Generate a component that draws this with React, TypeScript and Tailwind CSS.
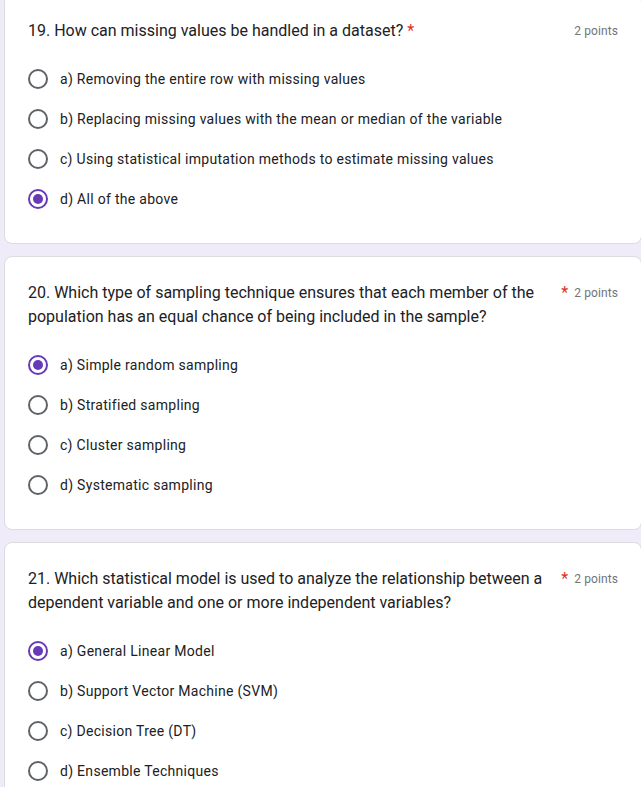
import React from "react";

type Q = {
  num: number;
  text: string;
  options: string[];
  selected: number;
};

const questions: Q[] = [
  {
    num: 19,
    text: "How can missing values be handled in a dataset?",
    options: [
      "a) Removing the entire row with missing values",
      "b) Replacing missing values with the mean or median of the variable",
      "c) Using statistical imputation methods to estimate missing values",
      "d) All of the above",
    ],
    selected: 3,
  },
  {
    num: 20,
    text: "Which type of sampling technique ensures that each member of the population has an equal chance of being included in the sample?",
    options: [
      "a) Simple random sampling",
      "b) Stratified sampling",
      "c) Cluster sampling",
      "d) Systematic sampling",
    ],
    selected: 0,
  },
  {
    num: 21,
    text: "Which statistical model is used to analyze the relationship between a dependent variable and one or more independent variables?",
    options: [
      "a) General Linear Model",
      "b) Support Vector Machine (SVM)",
      "c) Decision Tree (DT)",
      "d) Ensemble Techniques",
    ],
    selected: 0,
  },
];

function Radio({ checked }: { checked: boolean }) {
  if (checked) {
    return (
      <div className="w-5 h-5 shrink-0 rounded-full border-2 border-[#673ab7] flex items-center justify-center">
        <div className="w-2.5 h-2.5 rounded-full bg-[#673ab7]" />
      </div>
    );
  }
  return <div className="w-5 h-5 shrink-0 rounded-full border-2 border-[#5f6368]" />;
}

function Card({ q }: { q: Q }) {
  return (
    <div className="bg-white border border-[#dadce0] rounded-lg pl-[23px] pr-[23px] pt-6 pb-6">
      <div className="flex items-start">
        <div className="flex-1 min-w-0 flex items-start">
          <span className="text-[16px] leading-6 tracking-[0px] text-[#202124]">
            {q.num}. {q.text}
          </span>
          <span className="pl-1 text-[16px] leading-6 text-[#d93025] shrink-0">*</span>
        </div>
        <div className="pl-1.5 shrink-0 text-[12px] leading-6 tracking-[0.1px] text-[#70757a]">
          2 points
        </div>
      </div>
      <div className="mt-4 flex flex-col">
        {q.options.map((o, i) => (
          <div key={i} className="h-10 flex items-center gap-3">
            <Radio checked={i === q.selected} />
            <span className="text-[14px] leading-5 tracking-[0.29px] text-[#202124]">{o}</span>
          </div>
        ))}
      </div>
    </div>
  );
}

export default function App() {
  return (
    <div
      className="w-[641px] h-[787px] overflow-hidden bg-[#f0ebf8]"
      style={{ fontFamily: "Roboto, 'Liberation Sans', Arial, sans-serif" }}
    >
      <div className="ml-[4px] w-[638px] mt-[-6px] flex flex-col gap-3">
        {questions.map((q) => (
          <Card key={q.num} q={q} />
        ))}
      </div>
    </div>
  );
}
